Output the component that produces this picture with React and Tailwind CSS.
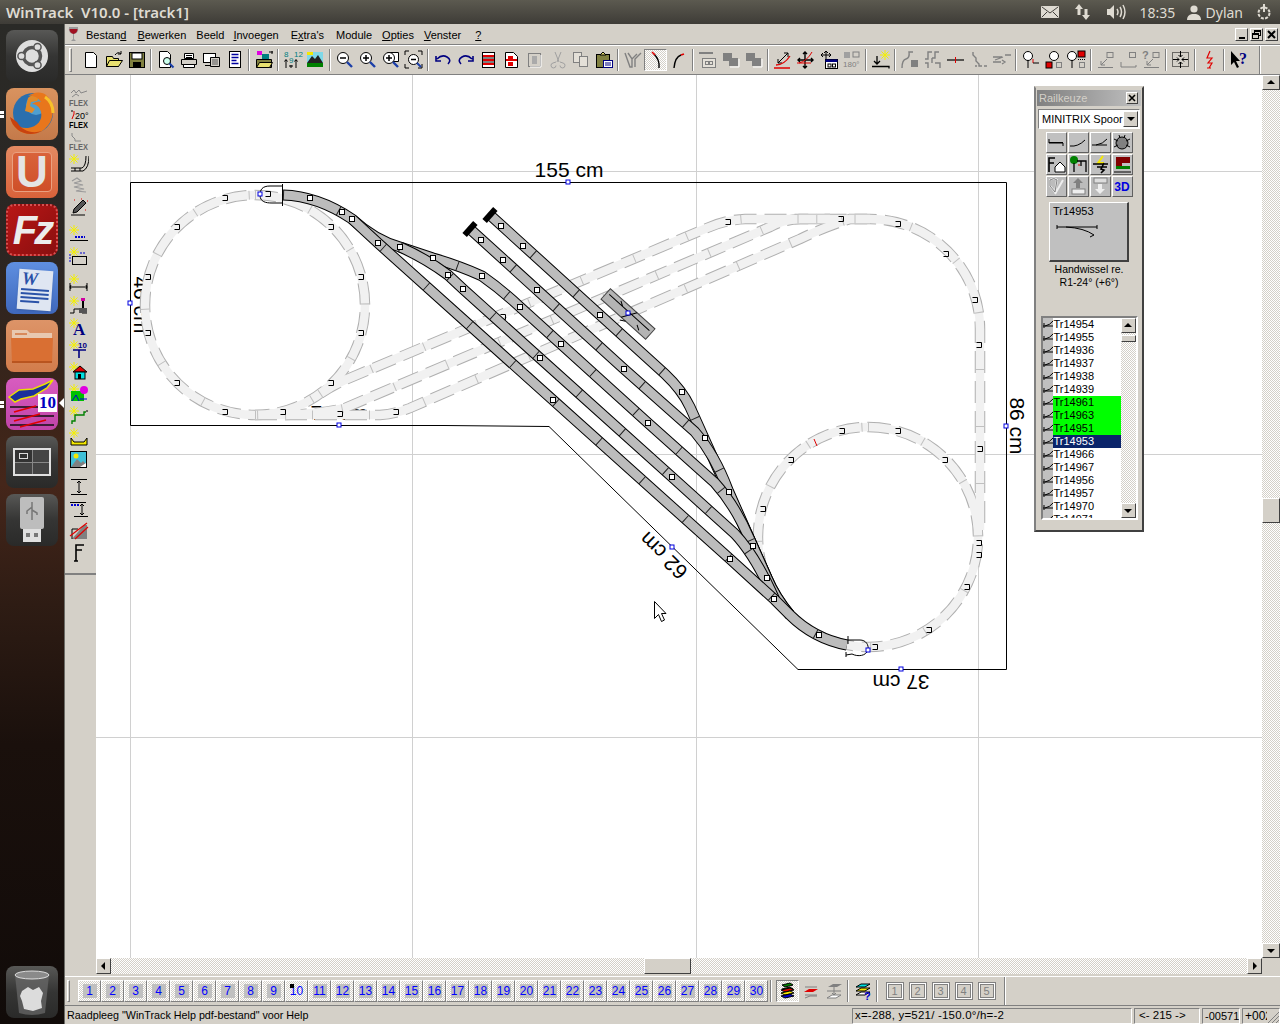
import React from 'react';

const raised = 'border border-t-white border-l-white border-r-[#404040] border-b-[#404040]';
const sunken = 'border border-t-[#808080] border-l-[#808080] border-r-white border-b-white';
const dither = 'bg-[repeating-conic-gradient(#d4d0c8_0%_25%,#ffffff_0%_50%)] bg-[length:2px_2px]';
const G = '#808080';

const Z = ({ plus, minus }) => (
  <>
    <circle cx="8" cy="8" r="5.5" fill="#fff" stroke="#000" />
    <path d="M12 12l5 5" stroke="#1c3fa8" strokeWidth="2.4" />
    {minus && <path d="M5 8h6" stroke="#000" strokeWidth="1.5" />}
    {plus && <path d="M5 8h6M8 5v6" stroke="#000" strokeWidth="1.5" />}
  </>
);

const star = (
  <g stroke="#f4f000">
    <path d="M5 0v10M0 5h10M1.5 1.5l7 7M8.5 1.5l-7 7" />
  </g>
);

const greyDown = (
  <>
    <rect x="11" y="2.5" width="6" height="5" stroke={G} fill="#d4d0c8" />
    <path d="M11 9l-6 6M5 11v4h4M2 17.5h15" stroke={G} />
  </>
);

const flex = (fill) => (
  <text x="0" y="18" textLength="19" lengthAdjust="spacingAndGlyphs" className="font-['Liberation_Sans'] text-[9px] font-bold" fill={fill}>FLEX</text>
);

const icons = {
  new: <path d="M4.5 2.5h8l3 3v12h-11z" fill="#fff" stroke="#000" />,
  open: (
    <>
      <path d="M2.5 6.5h6l1 2h5v8h-12z" fill="#e8e070" stroke="#000" />
      <path d="M2.5 16.5l3-6h13l-4 6z" fill="#e8e070" stroke="#000" />
      <path d="M11 5q3-4 6-1M17 1v3h-3" stroke="#000" />
    </>
  ),
  save: (
    <>
      <rect x="2.5" y="2.5" width="15" height="15" fill="#808040" stroke="#000" />
      <rect x="5" y="3" width="10" height="6" fill="#fff" stroke="#000" />
      <rect x="6" y="12" width="8" height="5" fill="#000" />
    </>
  ),
  preview: (
    <>
      <path d="M3.5 1.5h8l3 3v13h-11z" fill="#fff" stroke="#000" />
      <circle cx="11" cy="11" r="3.5" fill="#cfe" stroke="#000" />
      <path d="M13.5 13.5l4 4" stroke="#1c3fa8" strokeWidth="2.2" />
    </>
  ),
  print: (
    <>
      <path d="M5.5 3.5h9v5h-9z" fill="#fff" stroke="#000" />
      <path d="M2.5 9.5h15v5h-15z" fill="#d4d0c8" stroke="#000" />
      <path d="M4.5 14.5h11v3h-11z" fill="#fff" stroke="#000" />
      <path d="M7 5.5h6M7 7.5h6" stroke="#000" />
    </>
  ),
  setup: (
    <>
      <rect x="1.5" y="3.5" width="12" height="9" fill="#fff" stroke="#000" />
      <path d="M3 15.5h9" stroke="#000" />
      <path d="M8.5 7.5h9v9h-9z" fill="#d4d0c8" stroke="#000" />
      <path d="M10 10h6M10 12h6M10 14h6" stroke="#555" />
    </>
  ),
  list: (
    <>
      <rect x="4.5" y="1.5" width="11" height="16" fill="#fff" stroke="#000" />
      <path d="M6.5 4.5h7M6.5 7.5h7M6.5 10.5h5M6.5 13.5h7" stroke="#0000a0" strokeWidth="1.4" />
    </>
  ),
  open2: (
    <>
      <rect x="3" y="1" width="5" height="4" fill="#e000e0" />
      <rect x="8" y="4" width="7" height="6" fill="#008080" />
      <path d="M2.5 9.5h15v8h-15z" fill="#808040" stroke="#000" />
      <path d="M2.5 17.5l3-5h13l-3 5z" fill="#e8e070" stroke="#000" />
      <path d="M15 2h4M18 1v3" stroke="#000" />
    </>
  ),
  num: (
    <>
      <text x="1" y="7" className="font-['Liberation_Sans'] text-[8px]" fill="#008080">8</text>
      <text x="11" y="7" className="font-['Liberation_Sans'] text-[8px]" fill="#008080">12</text>
      <text x="6" y="13" className="font-['Liberation_Sans'] text-[8px]" fill="#008080">9</text>
      <path d="M3 18v-8M13 18v-8M8 18v-3M1.5 11.5l1.5-2 1.5 2M11.5 11.5l1.5-2 1.5 2M6 16h4" stroke="#000" />
    </>
  ),
  land: (
    <>
      <rect x="1" y="2" width="16" height="15" fill="#7fd8e8" />
      <rect x="1" y="2" width="6" height="3" fill="#f4e800" />
      <path d="M1 13l5-7 3 3 3-4 5 8v1H1z" fill="#222" />
      <rect x="1" y="13" width="16" height="4" fill="#008000" />
    </>
  ),
  zo: <Z minus />,
  zi: <Z plus />,
  zf: (
    <>
      <path d="M6.5 2.5h11v9h-6" stroke="#000" fill="#fff" />
      <Z plus />
    </>
  ),
  za: (
    <>
      <path d="M1 5V1h4M14 1h4v4M1 14v4h4M18 14v4h-4" stroke="#000" />
      <circle cx="9.5" cy="9.5" r="5" fill="#fff" stroke="#000" />
      <path d="M7 9.5h5" stroke="#000" strokeWidth="1.5" />
      <path d="M13 13l4 4" stroke="#1c3fa8" strokeWidth="2" />
    </>
  ),
  undo: <path d="M4 9q5-5 10-2t1 7M3 6v5h5" stroke="#000080" strokeWidth="1.6" />,
  redo: <path d="M16 9q-5-5-10-2t-1 7M17 6v5h-5" stroke="#000080" strokeWidth="1.6" />,
  d1: (
    <>
      <rect x="3.5" y="2.5" width="12" height="15" fill="#fff" stroke="#000" />
      <path d="M4 6h11M4 10h11M4 14h11" stroke="#e00000" strokeWidth="2" />
      <path d="M4 8h11M4 12h11" stroke="#000" />
    </>
  ),
  d2: (
    <>
      <path d="M3.5 2.5h8l4 4v11h-12z" fill="#fff" stroke="#000" />
      <rect x="6" y="6" width="5" height="3" fill="#e00000" />
      <path d="M4 10h11" stroke="#e00000" strokeWidth="2" />
      <rect x="6" y="12" width="5" height="4" fill="#e00000" />
    </>
  ),
  d3: (
    <>
      <rect x="3.5" y="3.5" width="12" height="13" fill="#d4d0c8" stroke={G} />
      <rect x="7" y="6" width="5" height="8" fill="#aaa" />
      <path d="M16 5v12H5" stroke="#fff" />
    </>
  ),
  cut: <path d="M7 2l4 10M13 2L9 12M8 15.5a2.5 2.5 0 1 1-3-2.5l3-1M12 15.5a2.5 2.5 0 1 0 3-2.5l-3-1" stroke="#a0a0a0" />,
  copy: (
    <>
      <rect x="2.5" y="2.5" width="8" height="10" stroke={G} fill="#e4e0d8" />
      <rect x="8.5" y="6.5" width="8" height="10" stroke={G} fill="#e4e0d8" />
    </>
  ),
  paste: (
    <>
      <rect x="2.5" y="4.5" width="13" height="13" fill="#808040" stroke="#000" />
      <path d="M6 5l3-3 3 3z" fill="#e8e070" stroke="#000" />
      <rect x="9.5" y="10.5" width="9" height="7" fill="#fff" stroke="#000080" />
      <path d="M11 13h6M11 15h6" stroke="#000080" />
    </>
  ),
  fork: <path d="M2 3l5 14h2V9M18 3l-6 6v8M5 3l4 6 5-5" stroke={G} strokeWidth="1.4" />,
  curveA: (
    <>
      <path d="M8 4q6 6 5 14" stroke="#000" strokeWidth="1.4" />
      <path d="M6 2l3 3" stroke="#e00000" strokeWidth="1.6" />
    </>
  ),
  curveB: (
    <>
      <path d="M5 18q1-11 7-13" stroke="#000" strokeWidth="1.4" />
      <path d="M12 5l3-1" stroke="#e00000" strokeWidth="1.8" />
    </>
  ),
  box: (
    <>
      <path d="M1 3h14" stroke={G} strokeWidth="2" />
      <rect x="4.5" y="8.5" width="13" height="9" fill="#e4e0d8" stroke={G} />
      <rect x="7.5" y="11.5" width="3" height="3" stroke={G} />
      <rect x="11.5" y="11.5" width="3" height="3" stroke={G} />
    </>
  ),
  stack: (
    <>
      <rect x="2" y="3" width="9" height="8" fill={G} />
      <rect x="8" y="8" width="9" height="8" fill={G} />
      <path d="M18 9v8H9" stroke="#fff" />
    </>
  ),
  rd1: (
    <>
      <path d="M5 13L15 3M11 3h4v4M5 9v4h4" stroke="#000" />
      <path d="M1 18h16M3 15q8 0 14-9" stroke="#e00000" strokeWidth="1.3" />
    </>
  ),
  rd2: (
    <>
      <path d="M9 2v16M2 10h15M7 4l2-2 2 2M7 16l2 2 2-2M4 8l-2 2 2 2M15 8l2 2-2 2" stroke="#000" strokeWidth="1.4" />
      <path d="M1 13h14M3 13q8-2 13-11" stroke="#e00000" />
    </>
  ),
  mv: (
    <>
      <path d="M7 1v9M2 5h10M5 3l2-2 2 2M4 3L2 5l2 2M10 3l2 2-2 2" stroke="#000" />
      <rect x="6.5" y="9.5" width="12" height="9" fill="#fff" stroke="#000" />
      <rect x="6.5" y="9.5" width="12" height="2.5" fill="#000080" />
      <rect x="9" y="14" width="3" height="3" stroke="#000" />
      <rect x="13.5" y="14" width="3" height="3" stroke="#000" />
    </>
  ),
  r180: (
    <>
      <rect x="2" y="2" width="6" height="6" fill="#a0a0a0" />
      <rect x="11" y="2" width="6" height="5" stroke={G} />
      <text x="1" y="17" className="font-['Liberation_Sans'] text-[8px]" fill={G}>180°</text>
    </>
  ),
  spark: (
    <>
      <g transform="translate(9 0)">{star}</g>
      <path d="M6 6v8M3 11l3 3 3-3M1 16.5h17v2" stroke="#000" strokeWidth="1.3" />
    </>
  ),
  gc1: (
    <>
      <path d="M2 18q0-8 4-9t3-7h4" stroke={G} strokeWidth="1.4" />
      <rect x="11" y="10" width="7" height="7" fill={G} />
    </>
  ),
  gc2: <path d="M2 9h3V2h4M2 13h3v5M9 8h3V2h4M12 13h5v5M9 8v5" stroke={G} strokeWidth="1.4" />,
  tick: <path d="M1 10h17" stroke="#000" strokeWidth="1.2" />,
  tickRed: (
    <>
      <path d="M1 10h17" stroke="#000" strokeWidth="1.2" />
      <path d="M9.5 7v6" stroke="#e00000" />
    </>
  ),
  gt: <path d="M4 2v3l3 3v3l3 3v2h3M15 16h3M6 16h2" stroke={G} strokeWidth="1.4" />,
  gs: <path d="M1 7h9M13 5h6M1 12h8M3 10l8-3M10 10l3 2-3 2" stroke={G} strokeWidth="1.3" />,
  b1: (
    <>
      <circle cx="7" cy="6" r="4.5" fill="#fff" stroke="#000" />
      <path d="M7 10v8" stroke="#000" />
      <path d="M12 9v4" stroke="#e00000" />
      <path d="M12 13h6" stroke="#000" />
    </>
  ),
  b2: (
    <>
      <circle cx="10" cy="6" r="4.5" fill="#fff" stroke="#000" />
      <rect x="2" y="12" width="6" height="6" fill="#e00000" stroke="#000" />
      <rect x="12.5" y="12.5" width="5" height="5" stroke={G} />
    </>
  ),
  b3: (
    <>
      <circle cx="5" cy="6" r="4.5" fill="#fff" stroke="#000" />
      <path d="M5 10v8" stroke="#000" />
      <rect x="11" y="1" width="7" height="6" fill="#e00000" stroke="#000" />
      <path d="M11 9.5h7" stroke="#000" strokeDasharray="1 1" />
      <rect x="12.5" y="12.5" width="5" height="5" stroke={G} />
    </>
  ),
  gd1: greyDown,
  gd2: (
    <>
      <rect x="10.5" y="2.5" width="6" height="5" stroke={G} fill="#d4d0c8" />
      <path d="M2 12v5h15v-2" stroke={G} />
    </>
  ),
  gd3: (
    <>
      {greyDown}
      <text x="0" y="9" className="font-['Liberation_Sans'] text-[11px] font-bold" fill={G}>?</text>
    </>
  ),
  pts: (
    <>
      <rect x="1.5" y="2.5" width="16" height="14" stroke="#000" strokeDasharray="1 1" />
      <path d="M9.5 1v6M7.5 5l2 2 2-2M9.5 18v-6M7.5 14l2-2 2 2M2 9.5h6M6 7.5l2 2-2 2M17 9.5h-6M13 7.5l-2 2 2 2" stroke="#000" />
    </>
  ),
  bolt: <path d="M10 1L7 8h5l-4 5h4l-3 5M7 18h4" stroke="#e00000" strokeWidth="1.2" />,
  help: (
    <>
      <path d="M2 1v14l3-3 3 6 2-1-3-6h4z" fill="#000" />
      <text x="10" y="14" className="font-['Liberation_Serif'] text-[16px] font-bold" fill="#000080">?</text>
    </>
  ),
  f1: (
    <>
      <path d="M2 5l3-3 2 3 3-3 2 3 6-2M3 9l4-3 3 2" stroke="#888" />
      {flex('#666')}
    </>
  ),
  f2: (
    <>
      <path d="M5 1v3L3 9" stroke="#e00000" />
      <path d="M2 1h2" stroke="#000" />
      <text x="6" y="9" className="font-['Liberation_Sans'] text-[9px]" fill="#000">20°</text>
      {flex('#000')}
    </>
  ),
  f3: (
    <>
      <path d="M3 1v3l3 3v2h6" stroke="#888" />
      {flex('#666')}
    </>
  ),
  st1: (
    <>
      <g transform="translate(0 0)">{star}</g>
      <path d="M2 14h11q4-2 4-12M2 17h12q6-3 6-15M6 14v3M11 14v3" stroke="#000" />
    </>
  ),
  coil: <path d="M3 5l5-3 4 3-7 2 9 2-9 2 10 2-8 2 10 1" stroke="#999" strokeWidth="1.2" />,
  wand: (
    <>
      <path d="M2 17h14M4 15l4-1 9-9-3-3-9 9z" fill="#555" stroke="#000" />
      <path d="M5 2h1M16 12h1M12 1h1M18 3h1" stroke="#e00000" />
    </>
  ),
  s1: (
    <>
      <g transform="translate(0 0)">{star}</g>
      <path d="M6 12h10" stroke="#0000d0" strokeWidth="2" strokeDasharray="2 1" />
      <path d="M1 15.5h18" stroke="#000" />
    </>
  ),
  s2: (
    <>
      <g transform="translate(0 0)">{star}</g>
      <path d="M11 6h6" stroke="#0000d0" strokeDasharray="2 1" />
      <rect x="3.5" y="9.5" width="14" height="8" stroke="#000" />
      <path d="M1 7v9" stroke="#0000d0" strokeDasharray="2 1" />
    </>
  ),
  s3: (
    <>
      <g transform="translate(0 0)">{star}</g>
      <path d="M1 13h17M2 11l-1 2 1 2M17 11l1 2-1 2M1 9v8M18 9v8" stroke="#000" />
    </>
  ),
  s4: (
    <>
      <g transform="translate(0 0)">{star}</g>
      <path d="M1 17h4v-4h8v4h5" stroke="#000" />
      <rect x="10" y="12" width="8" height="5" fill="#555" />
      <path d="M14 4v8" stroke="#000" strokeWidth="2" />
      <rect x="12" y="2" width="4" height="3" fill="#d000a0" />
    </>
  ),
  s5: (
    <>
      <g transform="translate(0 0)">{star}</g>
      <text x="4" y="17" className="font-['Liberation_Serif'] text-[17px] font-bold" fill="#000080">A</text>
    </>
  ),
  s6: (
    <>
      <g transform="translate(0 0)">{star}</g>
      <text x="9" y="8" className="font-['Liberation_Sans'] text-[8px] font-bold" fill="#000080">10</text>
      <path d="M4 10h13M10 10v8" stroke="#000080" strokeWidth="1.6" />
    </>
  ),
  s7: (
    <>
      <g transform="translate(0 0)">{star}</g>
      <path d="M4 10l7-6 7 6z" fill="#e00000" stroke="#000" />
      <rect x="6" y="10" width="10" height="7" fill="#00e0e0" stroke="#000" />
      <rect x="9" y="12" width="3" height="5" fill="#000" />
    </>
  ),
  s8: (
    <>
      <g transform="translate(0 0)">{star}</g>
      <rect x="2" y="7" width="13" height="10" fill="#00c000" />
      <circle cx="15" cy="6" r="4" fill="#e000e0" />
      <path d="M3 17l4-6 3 6M11 15h7" stroke="#0000d0" />
    </>
  ),
  s9: (
    <>
      <g transform="translate(0 0)">{star}</g>
      <path d="M3 18v-3h3V9h9V6h2" stroke="#008000" strokeWidth="1.4" />
      <path d="M17 5h2" stroke="#000" />
    </>
  ),
  s10: (
    <>
      <g transform="translate(0 0)">{star}</g>
      <path d="M2 10v7h16v-7l-3 4H5z" fill="#f4e800" stroke="#000" />
    </>
  ),
  pic: (
    <>
      <rect x="1.5" y="1.5" width="16" height="16" fill="#40c0d8" stroke="#000" />
      <circle cx="7" cy="6" r="2.5" fill="#f4e800" />
      <path d="M2 17l6-8 4 4 2-2 3 3v3z" fill={G} />
      <path d="M11 17h6v-4z" fill="#fff" />
    </>
  ),
  hh: <path d="M2 2.5h16M2 17.5h16M10 4v12M8 6l2-2 2 2M8 14l2 2 2-2" stroke="#000" />,
  hb: (
    <>
      <path d="M1 3.5h16" stroke="#000" />
      <path d="M2 6h8" stroke="#0000d0" strokeWidth="2" strokeDasharray="2 1" />
      <path d="M5 17.5h14M13 5v11M11 7l2-2 2 2M11 14l2 2 2-2" stroke="#000" />
    </>
  ),
  hatch: (
    <>
      <path d="M3 18L15 4h3v14z" fill={G} />
      <path d="M3 18V8h6" stroke="#000" />
      <path d="M1 15L18 2M6 18L19 6" stroke="#e00000" strokeWidth="1.2" />
    </>
  ),
  rf: <path d="M7 18V2h8M7 7h6M5 18h4" stroke="#000" strokeWidth="1.6" />,
  l1: (
    <>
      <path d="M4 4l8-2 3 2-8 2zM4 8l8-2 3 2-8 2z" fill="#008000" stroke="#000" />
      <path d="M3 9l9-2 4 2-9 2z" fill="#e00000" stroke="#000" />
      <path d="M3 12l9-2 4 2-9 2z" fill="#f4e800" stroke="#000" />
      <path d="M3 15l9-2 4 2-9 2z" fill="#0000d0" stroke="#000" />
    </>
  ),
  l2: (
    <>
      <path d="M4 6h12M4 14h12" stroke={G} />
      <path d="M3 11l5-3h9l-5 3z" fill="#e00000" />
      <path d="M4 17l5-2h7" stroke={G} />
    </>
  ),
  l3: (
    <>
      <path d="M4 6l5-3h9l-5 3z" fill={G} />
      <path d="M10 6v8M3 10h14M8 12l2 2 2-2" stroke={G} />
      <path d="M3 17l5-3h9l-5 3z" fill="#fff" stroke={G} />
    </>
  ),
  l4: (
    <>
      <path d="M3 6l5-3h9l-5 3z" fill="#00e0e0" stroke="#000" />
      <path d="M3 10l5-3h9l-5 3z" fill="#f4e800" stroke="#000" />
      <path d="M3 14l5-3h9l-5 3z" fill="#fff" stroke="#000" />
      <text x="11" y="19" className="font-['Liberation_Sans'] text-[11px] font-bold" fill="#0000d0">?</text>
    </>
  ),
};

const Ico = ({ n }) => (
  <svg width="20" height="20" viewBox="0 0 20 20" fill="none" className="block">
    {icons[n]}
  </svg>
);

const topTools = [
  'new', 'open', 'save', '|', 'preview', 'print', 'setup', 'list', '|', 'open2', '|', 'num', 'land', '|',
  'zo', 'zi', 'zf', 'za', '|', 'undo', 'redo', 'd1', 'd2', 'd3', 'cut', 'copy', 'paste', '|',
  'fork', '*curveA', 'curveB', '|', 'box', 'stack', 'stack', '|', 'rd1', 'rd2', 'mv', 'r180', '|', 'spark', '|',
  'gc1', 'gc2', 'tickRed', 'gt', 'gs', '|', 'b1', 'b2', 'b3', '|', 'gd1', 'gd2', 'gd3', '|', 'pts', '|', 'bolt', '|', 'help',
];

const sideTools = [
  'f1', 'f2', 'f3', 'st1', 'coil', 'wand', '|', 's1', 's2', '|',
  's3', 's4', 's5', 's6', 's7', 's8', 's9', 's10', 'pic', '|', 'hh', 'hb', 'hatch', 'rf',
];

const Sep = () => <div className="mx-[2px] h-[22px] w-[2px] border-l border-r border-l-[#808080] border-r-white" />;

const Arrow = ({ dir }) => {
  const d = { up: 'M1 6L5 2l4 4z', down: 'M1 3l4 4 4-4z', left: 'M6 1L2 5l4 4z', right: 'M3 1l4 4-4 4z' }[dir];
  return (
    <svg width="10" height="10" viewBox="0 0 10 10">
      <path d={d} fill="#000" />
    </svg>
  );
};

const ScrollBtn = ({ dir, className = '' }) => (
  <div className={`flex shrink-0 items-center justify-center bg-[#d4d0c8] ${raised} ${className}`}>
    <Arrow dir={dir} />
  </div>
);

const Tile = ({ bg, children }) => (
  <div className={`flex h-[52px] w-[52px] shrink-0 items-center justify-center overflow-hidden rounded-lg ${bg}`}>
    {children}
  </div>
);

const dark = 'bg-gradient-to-b from-[#585856] via-[#353534] to-[#2a2a29]';

function Dock() {
  return (
    <aside className="relative flex w-[65px] shrink-0 flex-col items-center gap-[6px] border-r border-r-[#6b6b66] bg-[linear-gradient(180deg,#2a2a27_0%,#2b2623_22%,#3a2419_38%,#45261a_46%,#2e1c14_58%,#1a100c_72%,#110b09_100%)] pt-[6px] pb-[6px]">
      <Tile bg={dark}>
        <svg width="40" height="40" viewBox="0 0 40 40" fill="none">
          <circle cx="20" cy="20" r="16" fill="#dedede" />
          <circle cx="20" cy="20" r="8.5" stroke="#555" strokeWidth="3.5" />
          <circle cx="9.5" cy="20" r="3.6" fill="#dedede" stroke="#555" strokeWidth="1.5" />
          <circle cx="25.5" cy="11" r="3.6" fill="#dedede" stroke="#555" strokeWidth="1.5" />
          <circle cx="25.5" cy="29" r="3.6" fill="#dedede" stroke="#555" strokeWidth="1.5" />
        </svg>
      </Tile>
      <Tile bg="bg-gradient-to-b from-[#d9935f] to-[#c47a4a]">
        <svg width="52" height="52" viewBox="0 0 52 52">
          <circle cx="27" cy="25" r="20" fill="#2a6fae" />
          <circle cx="30" cy="17" r="10" fill="#4f9fd0" />
          <path d="M22 10c3-3 8-3 12-1l-3 4-6 1-1 4 5 3-3 4-7-2z" fill="#e08a2a" />
          <path d="M41 8c9 9 8 27-5 35-12 7-29 2-32-14 3 6 9 12 18 11 9-1 15-8 13-16-1-5-5-8-9-8 3-2 6-3 9-2-3-5-9-7-13-6 6-4 14-5 19 0z" fill="#e8761c" />
          <path d="M4 29c3 15 19 21 32 14-10 3-20 0-25-9z" fill="#c8420f" />
          <path d="M39 9c6 4 8 10 8 16" stroke="#f7c02a" strokeWidth="3" fill="none" />
        </svg>
      </Tile>
      <Tile bg="bg-gradient-to-b from-[#e48a62] to-[#d9623a]">
        <div className="flex h-[40px] w-[40px] items-center justify-center rounded-sm border border-[#e9a080] bg-gradient-to-b from-[#d9623a] to-[#cf4f28]">
          <span className="font-['Liberation_Sans'] text-[44px] font-bold leading-none text-[#e4e4e4]">U</span>
        </div>
      </Tile>
      <Tile bg="bg-gradient-to-br from-[#b81616] to-[#8a0f0f] border-2 border-dotted border-[#d75050]">
        <span className="font-['Liberation_Sans'] text-[40px] font-bold italic leading-none tracking-[-3px] text-[#ececec]">Fz</span>
      </Tile>
      <Tile bg="relative bg-gradient-to-b from-[#5f8fe0] to-[#3f68bd]">
        <div className="ml-[6px] mt-[4px] flex h-[40px] w-[34px] rotate-[4deg] flex-col items-start bg-[#dfe6f2] px-[3px] shadow">
          <span className="font-['Liberation_Serif'] text-[18px] font-bold italic leading-[18px] text-[#2a52a8]">W</span>
          <div className="mt-[1px] h-[2px] w-full bg-[#2a52a8]" />
          <div className="mt-[2px] h-[2px] w-full bg-[#2a52a8]" />
          <div className="mt-[2px] h-[2px] w-full bg-[#2a52a8]" />
          <div className="mt-[2px] h-[2px] w-2/3 bg-[#2a52a8]" />
        </div>
      </Tile>
      <Tile bg="bg-gradient-to-b from-[#dd9468] to-[#d27c4b]">
        <svg width="46" height="40" viewBox="0 0 46 40">
          <path d="M3 4h15l3 3h22v30H3z" fill="#e8c8b0" />
          <rect x="6" y="7" width="12" height="2" fill="#d88a5c" />
          <path d="M2 12h42l-1 25H3z" fill="#d96f33" />
          <rect x="3" y="35" width="40" height="2" fill="#b9541f" />
        </svg>
      </Tile>
      <Tile bg="relative bg-gradient-to-b from-[#d85cc0] to-[#c044a8]">
        <svg width="52" height="52" viewBox="0 0 52 52">
          <path d="M3 19l10-7 14-1 12-5 8-4-6 8-13 8-13 3-6 3z" fill="#1b2f9a" stroke="#e8e000" strokeWidth="1.5" />
          <path d="M4 29h30M4 38h44M4 47h44" stroke="#111" strokeWidth="1.5" />
          <path d="M8 34l22-6M8 43l26-7M14 49l26-7" stroke="#e00000" strokeWidth="1.6" />
        </svg>
        <span className="absolute right-[1px] top-[16px] bg-white px-[1px] font-['Liberation_Serif'] text-[17px] font-bold leading-[18px] text-[#0000c0]">10</span>
      </Tile>
      <Tile bg={dark}>
        <div className="grid h-[28px] w-[38px] grid-cols-2 grid-rows-2 gap-px border-2 border-[#e0e0e0] bg-[#888]">
          <div className="flex items-center justify-center bg-[#333]">
            <div className="h-[6px] w-[9px] border border-[#ddd]" />
          </div>
          <div className="bg-[#444]" />
          <div className="bg-[#444]" />
          <div className="bg-[#444]" />
        </div>
      </Tile>
      <Tile bg={dark}>
        <svg width="34" height="48" viewBox="0 0 34 48">
          <rect x="5" y="1" width="24" height="32" rx="2" fill="#bdbdbd" />
          <path d="M17 6v18M17 11l-5 4v3M17 14l5 3v2" stroke="#777" strokeWidth="1.5" fill="none" />
          <rect x="8" y="33" width="18" height="13" fill="#e0e0e0" />
          <rect x="11" y="37" width="4" height="4" fill="#777" />
          <rect x="19" y="37" width="4" height="4" fill="#777" />
        </svg>
      </Tile>
      <div className="mt-auto">
        <Tile bg={dark}>
          <svg width="42" height="50" viewBox="0 0 42 50">
            <path d="M4 8h34l-4 38q-13 4-26 0z" fill="#6b6b6b" fillOpacity=".7" />
            <ellipse cx="21" cy="8" rx="17" ry="4" fill="#8a8a8a" stroke="#ddd" />
            <path d="M11 24l6-4 5 3 6-3 4 6-2 8 1 7-9 3-9-2-2-8-2-5z" fill="#dcdcdc" />
          </svg>
        </Tile>
      </div>
      <div className="absolute left-0 top-[87px] h-[3px] w-[4px] bg-white" />
      <div className="absolute left-0 top-[91px] h-[3px] w-[4px] bg-white" />
      <div className="absolute left-0 top-[377px] h-[3px] w-[4px] bg-white" />
      <div className="absolute left-0 top-[381px] h-[3px] w-[4px] bg-white" />
      <svg className="absolute right-0 top-[374px]" width="5" height="10" viewBox="0 0 5 10">
        <path d="M5 0L0 5l5 5z" fill="#fff" />
      </svg>
    </aside>
  );
}

function TopPanel() {
  return (
    <header className="flex h-6 shrink-0 items-center bg-gradient-to-b from-[#5c5a50] to-[#3e3c37] pl-[6px] font-['Noto_Sans',sans-serif] text-[#dfdbd2]">
      <span className="whitespace-pre text-[15px] font-semibold">WinTrack  V10.0 - [track1]</span>
      <div className="ml-auto flex items-center">
        <svg width="18" height="12" viewBox="0 0 18 12" className="mr-[15px]">
          <rect width="18" height="12" rx="1" fill="#dfdbd2" />
          <path d="M1 1l8 6 8-6M1 11l5-5M17 11l-5-5" stroke="#44423d" fill="none" />
        </svg>
        <svg width="18" height="18" viewBox="0 0 18 18" className="mr-[14px]">
          <path d="M5 1l4 5H6.5v6h-3V6H1zM12 17l-4-5h2.5V6h3v6H16z" fill="#dfdbd2" />
        </svg>
        <svg width="20" height="16" viewBox="0 0 20 16" className="mr-[14px]" fill="none">
          <path d="M1 5h3l4-4v14l-4-4H1z" fill="#dfdbd2" />
          <path d="M11 5q2 3 0 6M14 3q3 5 0 10M17 1q4 7 0 14" stroke="#dfdbd2" strokeWidth="1.5" />
        </svg>
        <span className="w-[35px] whitespace-nowrap text-[14px]">18:35</span>
        <svg width="14" height="15" viewBox="0 0 14 15" className="ml-[12px] mr-[5px]">
          <circle cx="7" cy="4" r="3.6" fill="#dfdbd2" />
          <path d="M0 15q0-5 5-6h4q5 1 5 6z" fill="#dfdbd2" />
        </svg>
        <span className="text-[14px]">Dylan</span>
        <svg width="18" height="18" viewBox="0 0 18 18" className="ml-[12px] mr-[7px]" fill="none">
          <circle cx="9" cy="10" r="5.5" stroke="#dfdbd2" strokeWidth="2" strokeDasharray="3 1.3" />
          <path d="M9 1v8" stroke="#dfdbd2" strokeWidth="2" />
        </svg>
      </div>
    </header>
  );
}

const menu = [
  ['Bestan', 'd', '', 'ml-[7px]'],
  ['', 'B', 'ewerken', 'ml-[11px]'],
  ['Beeld', '', '', 'ml-[10px]'],
  ['', 'I', 'nvoegen', 'ml-[9px]'],
  ['E', 'x', "tra's", 'ml-[12px]'],
  ['Module', '', '', 'ml-[12px]'],
  ['', 'O', 'pties', 'ml-[10px]'],
  ['', 'V', 'enster', 'ml-[10px]'],
  ['', '?', '', 'ml-[14px]'],
];

function MenuBar() {
  return (
    <div className="flex h-[20px] shrink-0 items-center pl-[3px] text-[11px] text-black">
      <svg width="11" height="16" viewBox="0 0 11 16">
        <path d="M1 1h9q1 6-4 7v5l2 2H3l2-2V8Q0 7 1 1z" fill="#9a9a9a" />
        <path d="M1.5 3h8q0 4-4 5-4-1-4-5z" fill="#a01020" />
      </svg>
      {menu.map(([a, u, b, cls]) => (
        <span key={a + u + b} className={`mt-[3px] whitespace-nowrap ${cls}`}>
          {a}
          {u && <span className="underline">{u}</span>}
          {b}
        </span>
      ))}
      <div className="ml-auto mr-[2px] flex gap-[2px]">
        <div className={`flex h-[13px] w-[13px] items-end justify-center bg-[#d4d0c8] pb-[1px] ${raised}`}>
          <div className="h-[2px] w-[6px] bg-black" />
        </div>
        <div className={`relative h-[13px] w-[13px] bg-[#d4d0c8] ${raised}`}>
          <div className="absolute left-[3px] top-[1px] h-[6px] w-[7px] border border-t-2 border-black" />
          <div className="absolute left-[1px] top-[4px] h-[6px] w-[7px] border border-t-2 border-black bg-[#d4d0c8]" />
        </div>
        <div className={`flex h-[13px] w-[13px] items-center justify-center bg-[#d4d0c8] ${raised}`}>
          <svg width="9" height="9" viewBox="0 0 9 9">
            <path d="M1 1l7 7M8 1L1 8" stroke="#000" strokeWidth="2" />
          </svg>
        </div>
      </div>
    </div>
  );
}

function TopToolbar() {
  return (
    <div className="flex h-[31px] shrink-0 items-center border-t border-t-[#808080] pl-[4px] shadow-[inset_0_1px_0_#fff] border-b border-b-[#808080]">
      <div className="mr-[7px] h-[24px] w-[3px] border border-r-[#808080] border-b-[#808080] border-t-white border-l-white" />
      {topTools.map((t, i) =>
        t === '|' ? (
          <Sep key={i} />
        ) : t[0] === '*' ? (
          <div key={i} className={`flex h-[22px] w-[23px] items-center justify-center ${dither} border border-t-[#808080] border-l-[#808080] border-r-white border-b-white`}>
            <Ico n={t.slice(1)} />
          </div>
        ) : (
          <div key={i} className="flex h-[22px] w-[23px] items-center justify-center">
            <Ico n={t} />
          </div>
        ),
      )}
      <div className="ml-[9px] h-[28px] w-[2px] border-l border-r border-l-[#808080] border-r-white" />
    </div>
  );
}

function SideToolbar() {
  return (
    <div className="flex w-[31px] shrink-0 flex-col">
      <div className="flex h-[500px] flex-col items-center border-b-2 border-b-[#808080] pr-[3px] pt-[12px]">
        {sideTools.map((t, i) =>
          t === '|' ? (
            <div key={i} className="h-[5px]" />
          ) : (
            <div key={i} className="flex h-[22px] w-[23px] shrink-0 items-center justify-center">
              <Ico n={t} />
            </div>
          ),
        )}
      </div>
    </div>
  );
}

const lightPaths = [
  'M255 195A110 110 0 1 1 255 415A110 110 0 1 1 255 195',
  'M868 427A110 110 0 1 1 868 647A110 110 0 1 1 868 427',
  'M320 394Q332 386 345 380L707 228Q725 220 745 219H870A110 110 0 0 1 980 329V530',
  'M285 415Q320 414 345 408L770 227Q782 220 800 219H830',
  'M255 415H380Q395 414 410 408L800 239Q822 228 850 219H870',
];

const darkPaths = [
  'M490 215L600 315L665 374Q682 390 690 407L767 578Q775 597 790 615',
  'M470 229L624 369L695 432Q715 455 728 490L767 578Q775 597 790 615',
  'M352 219Q375 240 400 247L433 258Q460 266 482 276Q502 290 520 307L648 423L715 483Q735 505 750 540L767 578',
  'M400 247Q425 258 448 275L463 289L672 477L735 534Q755 555 775 600',
  'M283 195Q318 196 352 219L378 243L730 559L775 600Q782 607 790 615A110 110 0 0 0 847 645',
];

const squares = [
  [310, 198], [342, 212], [352, 219], [378, 243], [400, 247], [433, 258], [448, 275], [463, 289], [482, 276],
  [520, 307], [561, 344], [648, 423], [729, 492], [501, 226], [523, 246], [600, 315], [682, 392], [705, 438],
  [481, 240], [503, 260], [537, 290], [624, 369], [540, 358], [672, 477], [553, 400], [730, 559], [753, 546],
  [767, 578], [774, 599], [819, 635],
];

const brackets = [
  [225, 198], [177, 227], [148, 277], [148, 333], [177, 383], [225, 412], [283, 412], [331, 383], [361, 333],
  [361, 277], [331, 227], [268, 194], [340, 414], [396, 412], [503, 317], [728, 222], [841, 219], [898, 224],
  [946, 254], [975, 300], [979, 345], [980, 449], [842, 431], [898, 431], [791, 460], [945, 460], [763, 509],
  [979, 543], [979, 555], [967, 587], [929, 630], [875, 647],
];

const handles = [[568, 182], [1006, 426], [901, 669], [672, 547], [339, 425], [130, 303], [260, 194], [868, 650], [628, 313]];

const labelFont = "font-['Liberation_Sans'] text-[21px]";

function Plan() {
  return (
    <svg viewBox="96 75 1166 883" width="1166" height="883" className="block" fill="none">
      <g stroke="#d0d0d0">
        <path d="M130.5 75V958M412.5 75V958M696.5 75V958M978.5 75V958M96 171.5H1262M96 454.5H1262M96 737.5H1262" />
      </g>

      <text transform="translate(134 305) rotate(90)" textAnchor="middle" fill="#000" className={labelFont}>46 cm</text>
      <text x="339" y="420" textAnchor="middle" fill="#000" className={labelFont}>74 cm</text>
      <text x="569" y="177" textAnchor="middle" fill="#000" className={labelFont}>155 cm</text>
      <text transform="translate(1010 426) rotate(90)" textAnchor="middle" fill="#000" className={labelFont}>86 cm</text>
      <text transform="translate(901 675) rotate(180)" textAnchor="middle" fill="#000" className={labelFont}>37 cm</text>
      <text transform="translate(668.5 550.5) rotate(224.4)" textAnchor="middle" fill="#000" className={labelFont}>62 cm</text>

      <path d="M130.5 182.5H1006.5V669.5H798L549 426.5L444 425.5H130.5Z" stroke="#000" />

      {lightPaths.map((d) => (
        <path key={d} d={d} stroke="#b0b0b0" strokeWidth="10.5" strokeDasharray="22 8" />
      ))}
      {lightPaths.map((d) => (
        <path key={d} d={d} stroke="#f1f1f1" strokeWidth="8.5" />
      ))}
      {lightPaths.map((d) => (
        <path key={d} d={d} stroke="#c0c0c0" strokeWidth="9" strokeDasharray="1 56" />
      ))}
      <path d="M814 439l3 7" stroke="#e00000" />
      {brackets.map(([x, y]) => (
        <path key={`${x}-${y}`} d={`M${x - 2.5} ${y - 2.5}h5v5h-5`} stroke="#000" />
      ))}

      <g transform="translate(628 314) rotate(42)">
        <rect x="-30" y="-7" width="60" height="14" fill="#b4b4b4" stroke="#444" />
        <path d="M-27 -2H27M-3 7L6 -7M3 7L-2 10M-14 -5l5 3M14 2l5 3" stroke="#000" />
      </g>

      {darkPaths.map((d) => (
        <g key={d}>
          <path d={d} stroke="#000" strokeWidth="11" />
          <path d={d} stroke="#bcbcbc" strokeWidth="9" />
          <path d={d} stroke="#222" strokeWidth="10" strokeDasharray="1 57" />
        </g>
      ))}

      <rect x="-8" y="-3" width="16" height="6" fill="#000" transform="translate(490 215) rotate(-48)" />
      <rect x="-8" y="-3" width="16" height="6" fill="#000" transform="translate(470 229) rotate(-48)" />

      <path d="M283 186H270C262 186 260 190 260 195C260 202 266 203 272 203H283M282.5 184V206" stroke="#000" />
      <path d="M848 640H860C866 640 869 645 868 650C866 656 858 657 852 654L846 655M848 636V644M846 652V657" stroke="#000" />

      {squares.map(([x, y]) => (
        <rect key={`${x}-${y}`} x={x - 2.5} y={y - 2.5} width="5" height="5" fill="#fff" stroke="#000" />
      ))}
      {handles.map(([x, y]) => (
        <rect key={`${x}-${y}`} x={x - 2} y={y - 2} width="4" height="4" fill="#fff" stroke="#0000e0" />
      ))}

      <path d="M654.5 601.5V618.5L658.5 614.5L661.5 621.5L664.5 620L661.5 613.5H666Z" fill="#fff" stroke="#000" />
    </svg>
  );
}

const railRows = [
  ['Tr14954', ''], ['Tr14955', ''], ['Tr14936', ''], ['Tr14937', ''], ['Tr14938', ''], ['Tr14939', ''],
  ['Tr14961', 'g'], ['Tr14963', 'g'], ['Tr14951', 'g'], ['Tr14953', 's'],
  ['Tr14966', ''], ['Tr14967', ''], ['Tr14956', ''], ['Tr14957', ''], ['Tr14970', ''], ['Tr14971', ''],
];

const PanelBtn = ({ children, grey }) => (
  <div className={`flex h-[21px] w-[21px] items-center justify-center ${grey ? 'bg-[#bcbcbc]' : 'bg-[#c0c0c0]'} border border-t-white border-l-white border-r-[#606060] border-b-[#606060]`}>
    {children}
  </div>
);

function RailPanel() {
  return (
    <div className="absolute left-[938px] top-[11px] flex h-[446px] w-[110px] flex-col border-2 border-t-[#d4d0c8] border-l-[#808080] border-r-[#404040] border-b-[#404040] bg-[#d4d0c8] px-[1px] pt-[2px] text-[11px]">
      <div className="flex h-[16px] shrink-0 items-center justify-between bg-gradient-to-r from-[#808080] to-[#c0c0c0] pl-[2px] pr-[3px] text-[11px] text-[#d4d0c8]">
        <span>Railkeuze</span>
        <div className={`flex h-[12px] w-[12px] items-center justify-center bg-[#d4d0c8] ${raised}`}>
          <svg width="8" height="8" viewBox="0 0 8 8">
            <path d="M1 1l6 6M7 1L1 7" stroke="#000" strokeWidth="1.6" />
          </svg>
        </div>
      </div>
      <div className={`mx-[1px] mt-[3px] flex h-[20px] shrink-0 items-center justify-between bg-white pl-[3px] pr-px ${sunken}`}>
        <span className="whitespace-nowrap">MINITRIX Spoor</span>
        <ScrollBtn dir="down" className="h-[16px] w-[15px]" />
      </div>
      <div className="mx-auto mt-[3px] grid shrink-0 grid-cols-[repeat(4,21px)] grid-rows-[repeat(3,21px)] gap-x-px gap-y-px">
        <PanelBtn><svg width="18" height="14" viewBox="0 0 18 14" fill="none"><path d="M2 3v4h14v3M2 6.5h14" stroke="#000" /></svg></PanelBtn>
        <PanelBtn><svg width="18" height="14" viewBox="0 0 18 14" fill="none"><path d="M1 10q8 1 15-6" stroke="#000" /></svg></PanelBtn>
        <PanelBtn><svg width="18" height="14" viewBox="0 0 18 14" fill="none"><path d="M1 9h15M5 9q7-1 11-6" stroke="#000" /></svg></PanelBtn>
        <PanelBtn><svg width="18" height="18" viewBox="0 0 18 18" fill="none"><circle cx="9" cy="9" r="6" fill={G} stroke="#000" /><path d="M1 5l4 2M1 13l4-2M17 5l-4 2M17 13l-4-2M6 1l1 3M12 1l-1 3" stroke="#000" /></svg></PanelBtn>
        <PanelBtn><svg width="19" height="17" viewBox="0 0 19 17" fill="none"><path d="M2 16V2h6M2 7h5" stroke="#000" strokeWidth="1.6" /><path d="M8 11l5-5 5 5v5H8z" fill="#fff" stroke="#000" /></svg></PanelBtn>
        <PanelBtn><svg width="19" height="19" viewBox="0 0 19 19" fill="none"><circle cx="5" cy="5" r="4" fill="#008000" /><path d="M5 8v9M8 6h9v11M12 6v5" stroke="#000" strokeWidth="1.3" /><path d="M9 10h2" stroke="#e00000" /></svg></PanelBtn>
        <PanelBtn><svg width="19" height="19" viewBox="0 0 19 19" fill="none"><path d="M12 1L7 8h6" stroke="#f4e800" strokeWidth="2" /><path d="M2 9h15M6 12h10M13 8l-3 6 3 1-3 3" stroke="#000" strokeWidth="1.6" /></svg></PanelBtn>
        <PanelBtn><svg width="19" height="17" viewBox="0 0 19 17"><rect x="3" y="1" width="14" height="6" fill="#800000" /><rect x="3" y="7" width="6" height="3" fill="#800000" /><rect x="3" y="10" width="14" height="3" fill="#008000" /><path d="M1 16h17" stroke="#000" /></svg></PanelBtn>
        <PanelBtn grey><svg width="19" height="19" viewBox="0 0 19 19" fill="none"><path d="M3 3q4-3 7 0l-2 12-5-6zM16 3l-8 14" stroke="#eee" strokeWidth="2" /><path d="M3 3q4-3 7 0l-2 12-5-6z" stroke={G} /></svg></PanelBtn>
        <PanelBtn grey><svg width="19" height="19" viewBox="0 0 19 19"><path d="M9 1l5 5h-3v5H7V6H4z" fill={G} /><rect x="3" y="12" width="13" height="5" fill="#eee" stroke={G} /></svg></PanelBtn>
        <PanelBtn grey><svg width="19" height="19" viewBox="0 0 19 19"><rect x="3" y="1" width="13" height="5" fill="#ddd" stroke={G} /><path d="M9 17l5-5h-3V7H7v5H4z" fill="#eee" /></svg></PanelBtn>
        <PanelBtn><span className="font-['Liberation_Sans'] text-[12px] font-bold text-[#0000e0]">3D</span></PanelBtn>
      </div>
      <div className="mx-auto mt-[5px] flex h-[60px] w-[80px] shrink-0 flex-col border border-t-white border-l-white border-r-[#404040] border-b-[#404040] bg-[#c0c0c0] pl-[3px] pt-[1px] border-b-2 border-r-2">
        <span className="leading-[14px]">Tr14953</span>
        <svg width="60" height="20" viewBox="0 0 60 20" className="ml-[3px] mt-[7px]" fill="none">
          <path d="M1 0v4M1 2h40M41 0v4M10 2q18 1 28 8M34 12l4-2" stroke="#000" />
        </svg>
      </div>
      <div className="shrink-0 text-center text-[10.5px] leading-[13px]">
        <div className="mt-[1px]">Handwissel re.</div>
        <div>R1-24° (+6°)</div>
      </div>
      <div className={`mx-auto mt-[27px] flex h-[204px] w-[97px] shrink-0 bg-white ${sunken} border-2 border-t-[#808080] border-l-[#808080]`}>
        <div className="h-full w-[78px] overflow-hidden">
          {railRows.map(([name, k]) => (
            <div
              key={name}
              className={`flex h-[13px] items-center leading-[13px] ${k === 'g' ? 'bg-[#00ff00]' : k === 's' ? 'bg-[#0a246a] text-white' : ''}`}
            >
              <svg width="11" height="13" viewBox="0 0 11 13" className="shrink-0">
                <rect width="10" height="13" fill="#c0c0c0" />
                <path d="M0 8h10M2 8q5-1 8-5M1 5v5" stroke="#000" fill="none" />
              </svg>
              {name}
            </div>
          ))}
        </div>
        <div className={`flex h-full flex-1 flex-col ${dither}`}>
          <ScrollBtn dir="up" className="h-[15px] w-full" />
          <div className={`mt-[2px] h-[7px] w-full bg-[#d4d0c8] ${raised}`} />
          <ScrollBtn dir="down" className="mt-auto h-[15px] w-full" />
        </div>
      </div>
    </div>
  );
}

const NumBtn = ({ n }) => (
  <div className={`relative flex h-[22px] w-[23px] shrink-0 items-center justify-center border border-t-white border-l-white border-r-[#808080] border-b-[#808080] ${dither}`}>
    <div className={`flex h-[14px] w-[14px] items-center justify-center text-[12px] leading-none text-[#0000ff] ${n === 10 ? '' : 'bg-[#c0c0c0]'}`}>{n}</div>
    {n === 10 && <div className="absolute left-[4px] top-[3px] h-[4px] w-[4px] bg-black" />}
  </div>
);

const Framed = ({ n }) => (
  <div className="mx-[2.5px] flex h-[18px] w-[18px] items-center justify-center border border-[#808080] bg-[#d4d0c8] shadow-[inset_0_0_0_1px_#fff,inset_0_0_0_2px_#808080]">
    <span className="text-[11px] leading-none text-[#808080]">{n}</span>
  </div>
);

function BottomToolbar() {
  return (
    <div className="flex h-[30px] shrink-0 items-center border-t border-t-white border-b border-b-[#808080] pl-[2px]">
      <div className="mr-[8px] h-[22px] w-[3px] border border-t-white border-l-white border-r-[#808080] border-b-[#808080]" />
      {Array.from({ length: 30 }, (_, i) => (
        <NumBtn key={i} n={i + 1} />
      ))}
      <Sep />
      <div className={`ml-[2px] flex h-[22px] w-[23px] items-center justify-center ${dither} border border-t-[#808080] border-l-[#808080] border-r-white border-b-white`}>
        <Ico n="l1" />
      </div>
      <div className="flex w-[23px] justify-center"><Ico n="l2" /></div>
      <div className="flex w-[23px] justify-center"><Ico n="l3" /></div>
      <Sep />
      <div className="flex w-[23px] justify-center"><Ico n="l4" /></div>
      <Sep />
      <div className="w-[3px]" />
      {[1, 2, 3, 4, 5].map((n) => (
        <Framed key={n} n={n} />
      ))}
      <div className="ml-[6px] h-[28px] w-[2px] border-l border-r border-l-[#808080] border-r-white" />
    </div>
  );
}

function StatusBar() {
  const cell = 'flex h-[16px] items-center overflow-hidden whitespace-nowrap border border-t-[#808080] border-l-[#808080] border-r-white border-b-white pl-[2px]';
  return (
    <div className="flex h-[18px] shrink-0 items-end text-[11px]">
      <span className="mb-[1px] ml-[2px] flex-1 whitespace-nowrap text-[10.75px]">Raadpleeg "WinTrack Help pdf-bestand" voor Help</span>
      <div className={`${cell} w-[280px] text-[11.5px] tracking-[0.2px]`}>x=-288, y=521/ -150.0°/h=-2</div>
      <div className={`${cell} ml-[2px] w-[66px] pl-[4px] text-[11.5px]`}>{'<- 215 ->'}</div>
      <div className={`${cell} ml-[2px] w-[38px]`}>-00571</div>
      <div className={`${cell} relative ml-[2px] w-[38px] text-[12px]`}>
        +0022
        <svg width="12" height="12" viewBox="0 0 12 12" className="absolute bottom-0 right-0 bg-[#d4d0c8]">
          <path d="M12 1L1 12M12 5l-7 7M12 9l-3 3" stroke="#808080" />
        </svg>
      </div>
    </div>
  );
}

export default function App() {
  return (
    <div className="flex h-[1024px] w-[1280px] flex-col overflow-hidden bg-[#d4d0c8] font-['Liberation_Sans',sans-serif] text-black">
      <TopPanel />
      <div className="flex min-h-0 flex-1">
        <Dock />
        <main className="flex min-w-0 flex-1 flex-col">
          <MenuBar />
          <TopToolbar />
          <div className="flex min-h-0 flex-1">
            <SideToolbar />
            <div className="flex min-w-0 flex-1 flex-col">
              <div className="flex h-[883px] shrink-0">
                <div className="relative h-[883px] w-[1166px] shrink-0 overflow-hidden bg-white">
                  <Plan />
                  <RailPanel />
                </div>
                <div className={`flex flex-1 flex-col ${dither}`}>
                  <ScrollBtn dir="up" className="h-[15px] w-full" />
                  <div className={`mt-[408px] h-[25px] w-full bg-[#d4d0c8] ${raised}`} />
                  <ScrollBtn dir="down" className="mt-auto h-[15px] w-full" />
                </div>
              </div>
              <div className="flex h-[16px] shrink-0">
                <div className={`flex w-[1166px] ${dither}`}>
                  <ScrollBtn dir="left" className="h-full w-[15px]" />
                  <div className={`ml-[533px] h-full w-[47px] bg-[#d4d0c8] ${raised}`} />
                  <ScrollBtn dir="right" className="ml-auto h-full w-[15px]" />
                </div>
              </div>
            </div>
          </div>
          <BottomToolbar />
          <StatusBar />
        </main>
      </div>
    </div>
  );
}
